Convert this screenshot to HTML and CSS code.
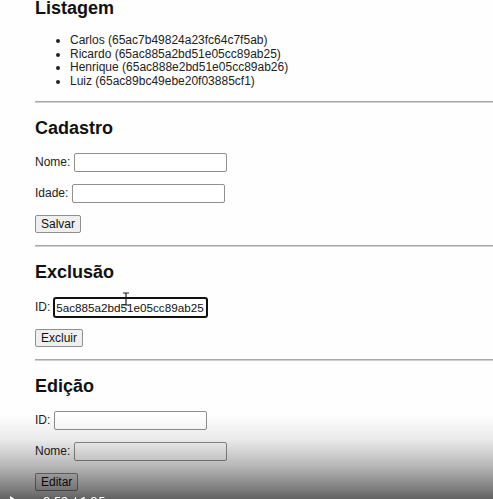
FILE: index.html
```html
<!DOCTYPE html>
<html lang="pt-BR">
<head>
<meta charset="utf-8">
<title>CRUD</title>
<link rel="stylesheet" href="styles.css">
</head>
<body>
  <main class="page">
    <h2 class="title">Listagem</h2>
    <ul class="list">
      <li>Carlos (65ac7b49824a23fc64c7f5ab)</li>
      <li>Ricardo (65ac885a2bd51e05cc89ab25)</li>
      <li>Henrique (65ac888e2bd51e05cc89ab26)</li>
      <li>Luiz (65ac89bc49ebe20f03885cf1)</li>
    </ul>
    <hr class="rule">

    <h2 class="title">Cadastro</h2>
    <p class="row"><label>Nome: <input class="field" type="text"></label></p>
    <p class="row"><label>Idade: <input class="field" type="text"></label></p>
    <p class="row"><button class="btn">Salvar</button></p>
    <hr class="rule">

    <h2 class="title">Exclusão</h2>
    <p class="row cursor-host"><label>ID: <input class="field field-focus" type="text" value="65ac885a2bd51e05cc89ab25"></label>
      <svg class="ibeam" width="8" height="14" viewBox="0 0 8 14"><path d="M1 1h2.5l0.5 0.6 0.5-0.6H7M4 1.6v10.8M1 13h2.5l0.5-0.6 0.5 0.6H7" fill="none" stroke="#222" stroke-width="1.2"/></svg>
    </p>
    <p class="row"><button class="btn">Excluir</button></p>
    <hr class="rule">

    <h2 class="title">Edição</h2>
    <p class="row"><label>ID: <input class="field" type="text"></label></p>
    <p class="row"><label>Nome: <input class="field" type="text"></label></p>
    <p class="row"><button class="btn">Editar</button></p>
  </main>

  <div class="video-shade">
    <svg class="play" width="8" height="10" viewBox="0 0 8 10"><path d="M0 0L8 5L0 10Z" fill="#fff"/></svg>
    <span class="time">0:52 / 1:05</span>
  </div>
</body>
</html>
```

FILE: styles.css
```css
html {
  overflow: hidden;
  background: #fefefe;
}

body {
  margin: 0;
  padding: 0 0 0 35px;
  font-family: "Liberation Sans", Arial, sans-serif;
  font-size: 12px;
  color: #222;
  background: #fefefe;
}

.page {
  display: block;
}

.title {
  font-size: 18px;
  font-weight: bold;
  color: #111;
  margin: 14.9px 0;
  line-height: 20.7px;
}

.page > .title:first-child {
  margin-top: -1.8px;
}

.list {
  margin: 12px 0;
  padding-left: 35px;
  line-height: 13.8px;
}

.rule {
  margin: 6px 0;
  border: 0;
  border-top: 1px solid #a9a9a9;
  border-bottom: 1px solid #d0d0d0;
  height: 0;
}

.row {
  margin: 12px 0;
  height: 19px;
  line-height: 19px;
  display: flex;
  align-items: center;
}

.row label {
  display: flex;
  align-items: center;
  white-space: pre;
}

.field {
  box-sizing: border-box;
  width: 153px;
  height: 19px;
  margin: 0;
  padding: 0 3px;
  border: 1px solid #8f8f8f;
  border-radius: 2px;
  background: #fff;
  font-family: "Liberation Sans", Arial, sans-serif;
  font-size: 12px;
  color: #111;
  outline: none;
}

.field-focus {
  border: 1px solid #111;
  box-shadow: 0 0 0 1px #111;
  font-size: 11.7px;
  text-indent: -6px;
  padding: 0 1px;
}

.cursor-host {
  position: relative;
}

.ibeam {
  position: absolute;
  left: 87px;
  top: -6px;
}

.btn {
  box-sizing: border-box;
  height: 18px;
  margin: 0;
  padding: 0 5px;
  border: 1px solid #8f8f8f;
  border-radius: 2px;
  background: #efefef;
  font-family: "Liberation Sans", Arial, sans-serif;
  font-size: 12px;
  color: #111;
  line-height: 16px;
}

.row:has(.btn) {
  height: 18px;
}

.video-shade {
  position: fixed;
  left: 0;
  right: 0;
  bottom: 0;
  height: 85px;
  background: linear-gradient(to bottom,
    rgba(0, 0, 0, 0) 0%,
    rgba(0, 0, 0, 0.08) 30%,
    rgba(0, 0, 0, 0.27) 60%,
    rgba(0, 0, 0, 0.48) 85%,
    rgba(0, 0, 0, 0.62) 100%);
  pointer-events: none;
}

.play {
  position: absolute;
  left: 10px;
  bottom: -7px;
}

.time {
  position: absolute;
  left: 43px;
  bottom: -10px;
  font-family: "Roboto", "Liberation Sans", sans-serif;
  font-size: 13px;
  line-height: 15px;
  color: #fff;
}
```
